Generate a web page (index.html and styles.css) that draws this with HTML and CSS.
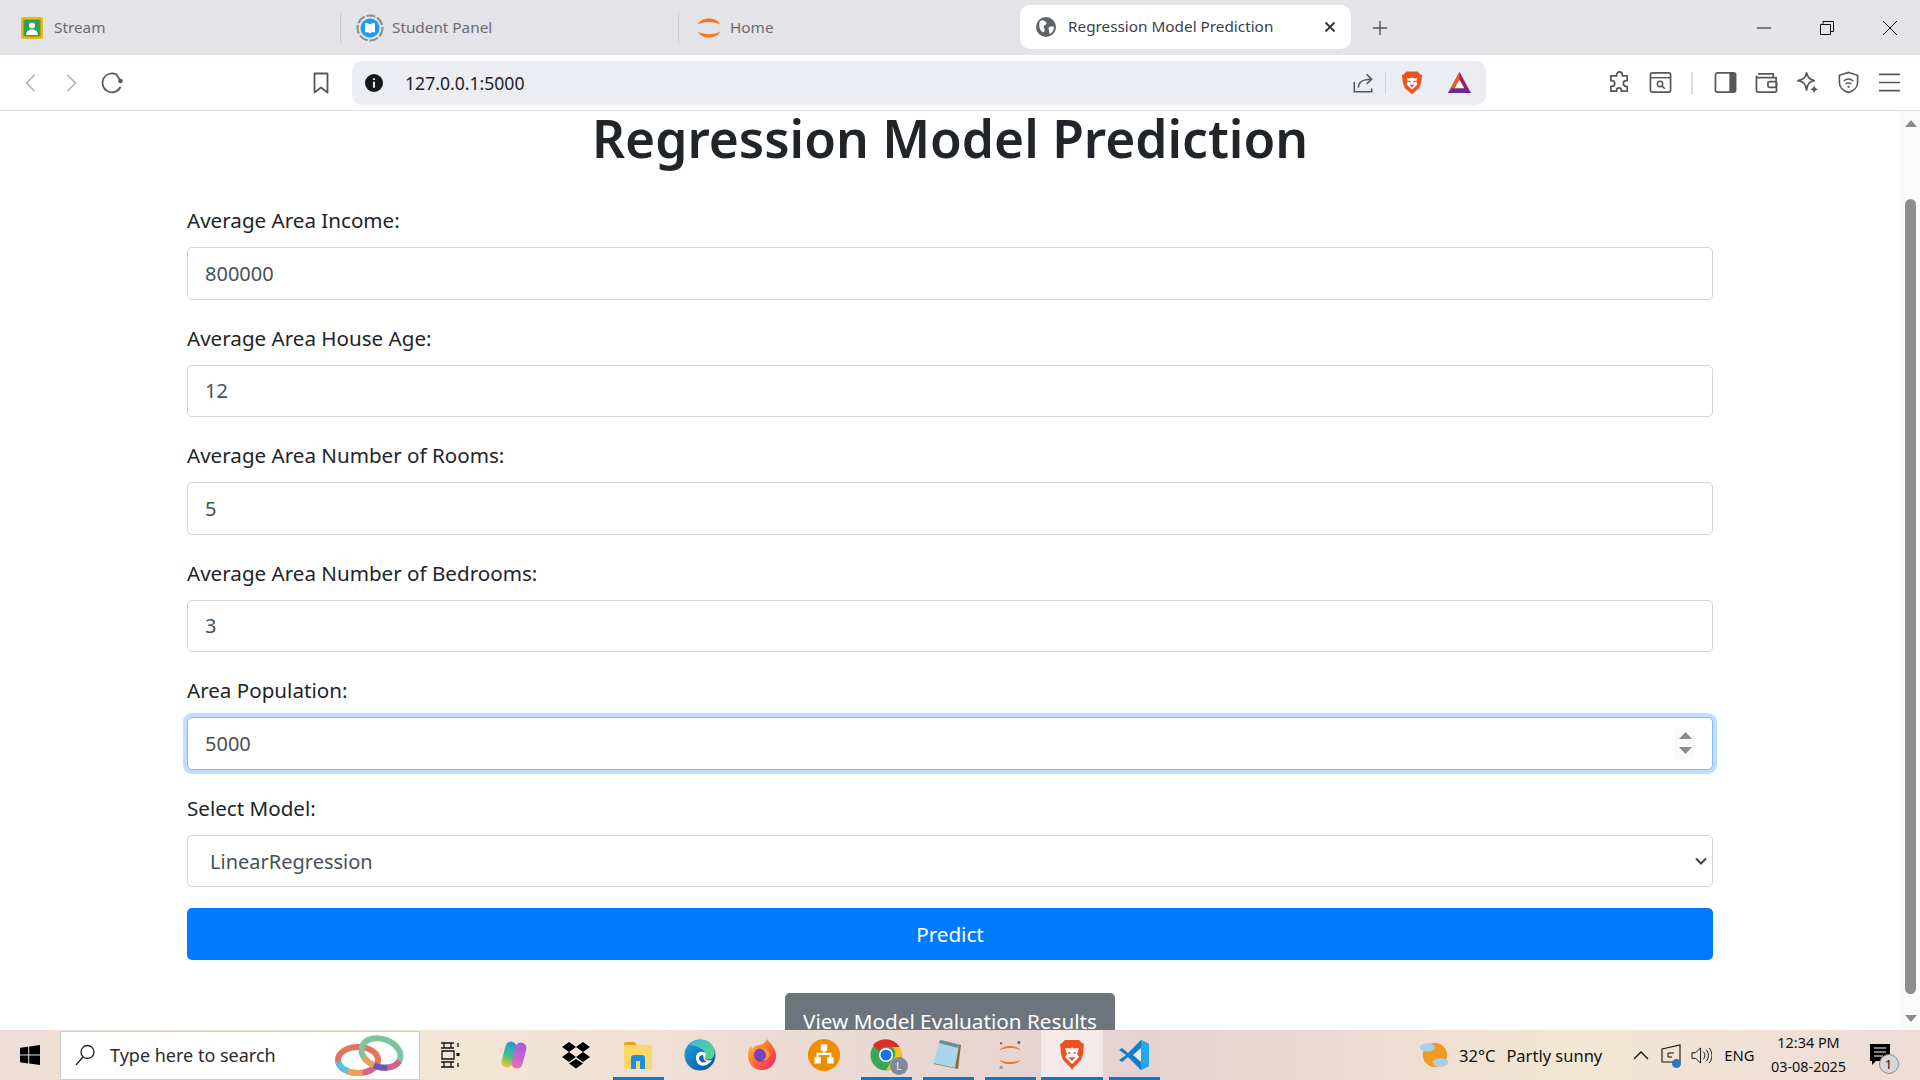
FILE: index.html
```html
<!DOCTYPE html>
<html lang="en">
  <head>
    <meta charset="UTF-8" />
    <title>Regression Model Prediction</title>
    <link rel="stylesheet" href="styles.css">
  </head>
  <body>
    <div class="tabbar">
      <div class="tab tab-stream">
        <svg class="fav" viewBox="0 0 22 22"><rect width="22" height="22" rx="2" fill="#f5b800"/><rect x="2.500" y="2.500" width="17" height="17" fill="#2f9e5b"/><circle cx="11" cy="8.500" r="3" fill="#fff"/><path d="M5 18c0-4 3-5.500 6-5.500s6 1.500 6 5.500z" fill="#fff"/></svg>
        <span>Stream</span>
      </div>
      <div class="tab tab-student">
        <svg class="fav fav-lg" viewBox="0 0 28 28"><circle cx="14" cy="14" r="12.500" fill="none" stroke="#8a8d93" stroke-width="2" stroke-dasharray="9 2"/><circle cx="14" cy="14" r="9.500" fill="#1e9bf0"/><path d="M9 9.500c2-.5 4 0 5 1 1-1 3-1.500 5-1v9c-2-.5-4 0-5 1-1-1-3-1.500-5-1z" fill="#fff"/></svg>
        <span>Student Panel</span>
      </div>
      <div class="tab tab-home">
        <svg class="fav fav-lg" viewBox="0 0 28 28"><path d="M3 10.500c3-8 19-8 22 0-5-3.500-17-3.500-22 0zM3 17.500c3 8 19 8 22 0-5 3.500-17 3.500-22 0z" fill="#f37726"/></svg>
        <span>Home</span>
      </div>
      <div class="tab-active">
        <svg class="fav" viewBox="0 0 20 20"><circle cx="10" cy="10" r="10" fill="#5f6368"/><path d="M4 4c3-1 5 0 6 1s0 3-1 3-2 2-1 3 1 3 0 4-3-1-4-3-1-6 0-8zM13 10c2-1 4-1 5 0 0 3-2 6-4 7-1-1-1-2-1-3s-1-3 0-4z" fill="#fff"/></svg>
        <span class="tab-active-title">Regression Model Prediction</span>
        <svg class="tab-close" viewBox="0 0 12 12"><path d="M1.500 1.500l9 9M10.500 1.500l-9 9" stroke="#333" stroke-width="1.800"/></svg>
      </div>
      <svg class="tab-new" viewBox="0 0 16 16"><path d="M8 1v14M1 8h14" stroke="#555" stroke-width="1.400"/></svg>
      <div class="window-btns">
        <svg viewBox="0 0 16 16"><path d="M1 8h14" stroke="#111" stroke-width="1"/></svg>
        <svg viewBox="0 0 16 16"><path d="M1.500 4.500h10v10h-10zM4 4.500V1.500h10.500v10H11.500" fill="none" stroke="#111" stroke-width="1"/></svg>
        <svg viewBox="0 0 16 16"><path d="M1 1l14 14M15 1L1 15" stroke="#111" stroke-width="1"/></svg>
      </div>
    </div>

    <div class="toolbar">
      <div class="nav-btns">
        <svg viewBox="0 0 20 24"><path d="M14 3L5 12l9 9" fill="none" stroke="#b5b5b8" stroke-width="1.800"/></svg>
        <svg viewBox="0 0 20 24"><path d="M6 3l9 9-9 9" fill="none" stroke="#b5b5b8" stroke-width="1.800"/></svg>
        <svg viewBox="0 0 24 24"><path d="M20.500 16a9.500 9.500 0 1 1-4-12.500" fill="none" stroke="#55585e" stroke-width="1.800"/><path d="M16 3l4 6" stroke="#55585e" stroke-width="1.800"/><circle cx="20.500" cy="10" r="2.300" fill="#55585e"/></svg>
      </div>
      <svg class="bookmark" viewBox="0 0 18 24"><path d="M2.500 2.500h13v19L9 16.500l-6.500 5z" fill="none" stroke="#55585e" stroke-width="1.800" stroke-linejoin="round"/></svg>
      <div class="addressbar">
        <svg class="info" viewBox="0 0 18 18"><circle cx="9" cy="9" r="9" fill="#17181c"/><path d="M9 4.200v1.800M9 7.800v6" stroke="#fff" stroke-width="1.800"/></svg>
        <span class="url">127.0.0.1:5000</span>
        <svg class="share" viewBox="0 0 24 24"><path d="M2.500 11v10.500h19V18M7 17c0-5 4-9 14-9M16 2.500L21.500 8 16 13" fill="none" stroke="#55585e" stroke-width="1.700"/></svg>
        <span class="addr-sep"></span>
        <svg class="brave" viewBox="0 0 24 26"><path d="M6 1h12l3 3 2 1-1 8-2 6-7 6-1 .5-1-.5-7-6-2-6-1-8 2-1z" fill="#f1501f"/><path d="M6 8l4 .5 2-1 2 1 4-.5-1.500 4 1.500 3-3 3-3 3-3-3-3-3 1.500-3z" fill="#fff"/><path d="M8 11.500l2.500.8M16 11.500l-2.500.8M10.500 16h3l-1.500 1.500z" stroke="#f1501f" stroke-width="1.200" fill="#f1501f"/></svg>
        <svg class="bat" viewBox="0 0 26 24"><path d="M13 1l12 22H1z" fill="#9e1f63"/><path d="M13 1L1 23h8l4-14z" fill="#f15a29"/><path d="M1 23h24l-4-5H5z" fill="#662d91"/><path d="M13 9l5 9H8z" fill="#fff"/></svg>
      </div>
      <div class="tool-icons">
        <svg viewBox="0 0 24 24"><path d="M9 4a3 3 0 0 1 6 0v1h5v5h-1a3 3 0 0 0 0 6h1v5h-6v-1a2.500 2.500 0 0 0-5 0v1H3v-5h1a3 3 0 0 0 0-6H3V5h6z" fill="none" stroke="#55585e" stroke-width="1.800" stroke-linejoin="round"/></svg>
        <svg viewBox="0 0 24 24"><rect x="1.500" y="2" width="21" height="20" rx="2" fill="none" stroke="#55585e" stroke-width="1.800"/><path d="M2 7h20" stroke="#55585e" stroke-width="1.500"/><circle cx="11.500" cy="13.500" r="2.800" fill="none" stroke="#55585e" stroke-width="1.600"/><path d="M13.500 15.500l3 3" stroke="#55585e" stroke-width="1.600"/></svg>
        <span class="tool-sep"></span>
        <svg viewBox="0 0 24 24"><rect x="1.500" y="2" width="21" height="20" rx="2" fill="none" stroke="#55585e" stroke-width="1.800"/><path d="M16 2h5a2 2 0 0 1 2 2v16a2 2 0 0 1-2 2h-5z" fill="#55585e"/></svg>
        <svg viewBox="0 0 24 24"><path d="M22 7H3.500a2 2 0 0 1-2-2v15a2 2 0 0 0 2 2h17a2 2 0 0 0 2-2zM3 3h16v4" fill="none" stroke="#55585e" stroke-width="1.800"/><rect x="13.500" y="11" width="9" height="6" rx="1.500" fill="none" stroke="#55585e" stroke-width="1.800"/></svg>
        <svg viewBox="0 0 24 24"><path d="M11 2c1 5 3 7 8 8-5 1-7 3-8 10-1-7-3-9-9-10 6-1 8-3 9-8z" fill="none" stroke="#55585e" stroke-width="1.800" stroke-linejoin="round"/><path d="M19 15l1.300 2.700L23 19l-2.700 1.300L19 23l-1.300-2.700L15 19l2.700-1.300z" fill="#55585e"/></svg>
        <svg viewBox="0 0 24 24"><path d="M12 1.500l9.500 3V12c0 5-4 9-9.500 10.500C6.500 21 2.500 17 2.500 12V4.500z" fill="none" stroke="#55585e" stroke-width="1.700"/><path d="M7 10.500c3-2.500 7-2.500 10 0M9 13.500c2-1.300 4-1.300 6 0" fill="none" stroke="#55585e" stroke-width="1.500"/><circle cx="12" cy="16.500" r="1.200" fill="#55585e"/></svg>
        <svg viewBox="0 0 24 24"><path d="M1 3.500h22M1 12h22M1 20.500h22" stroke="#55585e" stroke-width="1.800"/></svg>
      </div>
    </div>

    <div class="viewport">
      <main class="page">
        <h1>Regression Model Prediction</h1>
        <form class="predict-form">
          <div class="form-group">
            <label>Average Area Income:</label>
            <div class="form-control">800000</div>
          </div>
          <div class="form-group">
            <label>Average Area House Age:</label>
            <div class="form-control">12</div>
          </div>
          <div class="form-group">
            <label>Average Area Number of Rooms:</label>
            <div class="form-control">5</div>
          </div>
          <div class="form-group">
            <label>Average Area Number of Bedrooms:</label>
            <div class="form-control">3</div>
          </div>
          <div class="form-group">
            <label>Area Population:</label>
            <div class="form-control is-focus">
              <span>5000</span>
              <span class="spinner">
                <svg viewBox="0 0 13 22"><path d="M6.500 0L13 7H0zM0 15h13l-6.500 7z" fill="#8a8a8a"/></svg>
              </span>
            </div>
          </div>
          <div class="form-group form-group-select">
            <label>Select Model:</label>
            <div class="form-control form-select">
              <span>LinearRegression</span>
              <svg viewBox="0 0 12 8"><path d="M1 1.500l5 5 5-5" fill="none" stroke="#3d4450" stroke-width="2"/></svg>
            </div>
          </div>
          <div class="btn-predict">Predict</div>
        </form>
        <div class="results-row">
          <div class="btn-results">View Model Evaluation Results</div>
        </div>
      </main>
      <div class="scrollbar">
        <span class="arrow-up"></span>
        <div class="scroll-track"><div class="scroll-thumb"></div></div>
        <span class="arrow-down"></span>
      </div>
    </div>

    <div class="taskbar">
      <div class="start">
        <svg viewBox="0 0 20 20"><path d="M0 2.800l8.200-1.100v7.900H0zM9.200 1.500L20 0v9.600H9.200zM0 10.500h8.200v7.900L0 17.200zM9.200 10.500H20V20L9.200 18.500z" fill="#000"/></svg>
      </div>
      <div class="search">
        <svg class="search-icon" viewBox="0 0 20 22"><circle cx="12.500" cy="8" r="6.500" fill="none" stroke="#222" stroke-width="1.300"/><path d="M8 13L1 21" stroke="#222" stroke-width="1.300"/></svg>
        <span class="search-text">Type here to search</span>
        <svg class="rings" viewBox="0 0 72 44">
          <g fill="none" stroke-width="6">
            <ellipse cx="24" cy="27" rx="20" ry="13" stroke="#e2735e"/>
            <ellipse cx="24" cy="27" rx="20" ry="13" stroke="#58c4dc" stroke-dasharray="14 91" stroke-dashoffset="-36"/>
            <ellipse cx="24" cy="27" rx="20" ry="13" stroke="#f0a050" stroke-dasharray="14 91" stroke-dashoffset="-22"/>
            <ellipse cx="24" cy="27" rx="20" ry="13" stroke="#d9608c" stroke-dasharray="12 93" stroke-dashoffset="-8"/>
            <ellipse cx="47" cy="20" rx="20" ry="14" stroke="#7cc5a0" transform="rotate(18 47 20)"/>
            <ellipse cx="47" cy="20" rx="20" ry="14" stroke="#d9608c" stroke-dasharray="14 94" stroke-dashoffset="-2" transform="rotate(18 47 20)"/>
            <ellipse cx="47" cy="20" rx="20" ry="14" stroke="#6a55c0" stroke-dasharray="14 94" stroke-dashoffset="-16" transform="rotate(18 47 20)"/>
            <ellipse cx="47" cy="20" rx="20" ry="14" stroke="#f0a050" stroke-dasharray="12 96" stroke-dashoffset="-30" transform="rotate(18 47 20)"/>
          </g>
        </svg>
      </div>
      <div class="taskview">
        <svg viewBox="0 0 20 26"><path d="M1 1h13M1 6h13M2 9h12v8H2zM1 20h13M1 25h13M4 1v5M11 1v5M4 20v5M11 20v5M18 1v4M18 21v4" fill="none" stroke="#111" stroke-width="1.300"/><rect x="16.500" y="11" width="3" height="3" fill="#111"/></svg>
      </div>
      <div class="task-slot">
        <svg viewBox="0 0 30 30"><defs><linearGradient id="cp1" gradientUnits="userSpaceOnUse" x1="4" y1="26" x2="14" y2="2"><stop offset="0" stop-color="#f2c53d"/><stop offset=".45" stop-color="#3fc47a"/><stop offset="1" stop-color="#2a8ff0"/></linearGradient><linearGradient id="cp2" gradientUnits="userSpaceOnUse" x1="26" y1="4" x2="14" y2="28"><stop offset="0" stop-color="#a65be0"/><stop offset=".6" stop-color="#c864d0"/><stop offset="1" stop-color="#ef6fa6"/></linearGradient></defs><path d="M12 7L8 22" stroke="url(#cp1)" stroke-width="11" stroke-linecap="round" fill="none"/><path d="M22 8l-4 15" stroke="url(#cp2)" stroke-width="11" stroke-linecap="round" fill="none"/></svg>
      </div>
      <div class="task-slot">
        <svg viewBox="0 0 30 28"><path d="M8 1l7 5-7 5-7-5zM22 1l7 5-7 5-7-5zM8 11l7 5-7 5-7-5zM22 11l7 5-7 5-7-5zM15 18l7 4.500-7 5-7-5z" fill="#000"/></svg>
      </div>
      <div class="task-slot is-open">
        <svg viewBox="0 0 30 28"><path d="M1 3a2 2 0 0 1 2-2h8l3 3H1z" fill="#e3a21a"/><path d="M1 4h28v22a2 2 0 0 1-2 2H3a2 2 0 0 1-2-2z" fill="#fbd668"/><path d="M8 28V17a3 3 0 0 1 3-3h8a3 3 0 0 1 3 3v11h-5v-8h-4v8z" fill="#1d8fe0"/></svg>
      </div>
      <div class="task-slot">
        <svg class="icon-lg" viewBox="0 0 32 32"><defs><linearGradient id="edge1" x1="0" y1="0" x2="1" y2="1"><stop offset="0" stop-color="#1fa3e0"/><stop offset="1" stop-color="#0b4f9e"/></linearGradient><linearGradient id="edge2" x1="0" y1="0" x2="1" y2="1"><stop offset="0" stop-color="#35b8e0"/><stop offset="1" stop-color="#62dc7c"/></linearGradient></defs><circle cx="16" cy="16" r="15.500" fill="url(#edge1)"/><path d="M5 6c6-7 18-7 23 0 4 5 3 12-1 14-4 1-7 0-8-2 2-1 3-4 1-6-4-4-11-6-15-6z" fill="url(#edge2)"/><path d="M12 18c0-4 4-6 8-5 2 1 2 4 1 5-1 3 3 4 7 3-3 5-9 7-12 5-3-1-4-5-4-8z" fill="#fff"/><path d="M15 19c0-2 2-3 4-3 1 3 0 5 3 6 2 1-6 4-7-3z" fill="#1265b4"/></svg>
      </div>
      <div class="task-slot">
        <svg class="icon-lg" viewBox="0 0 32 32"><defs><linearGradient id="ff1" x1="0" y1="0" x2="1" y2="1"><stop offset="0" stop-color="#ffcb2e"/><stop offset=".5" stop-color="#ff6b2e"/><stop offset="1" stop-color="#e6207c"/></linearGradient></defs><path d="M21 0c2 3 8 8 9 15 1 9-6 16-14 16S2 25 2 16c0-4 1-7 3-9l1 3c2-3 5-4 8-4 3-1 6-3 7-6z" fill="url(#ff1)"/><circle cx="15" cy="16" r="7" fill="#7b3fc4"/><path d="M10 11c5-3 10 0 10 6 0 2-2 4-4 5 5 0 8-4 8-8-2-4-8-7-14-3z" fill="#ff9a2e"/></svg>
      </div>
      <div class="task-slot">
        <svg class="icon-lg" viewBox="0 0 30 30"><circle cx="15" cy="15" r="15" fill="#f08c00"/><path d="M12 5h6v6h-2v2h6v4h2v6h-6v-6h2v-2H10v2h2v6H6v-6h2v-4h6v-2h-2z" fill="#fff"/></svg>
      </div>
      <div class="task-slot is-open">
        <span class="chrome-wrap">
          <svg class="icon-lg" viewBox="0 0 32 32"><circle cx="16" cy="16" r="15.500" fill="#3aa757"/><path d="M16 .5A15.500 15.500 0 0 1 29.500 8H16a8 8 0 0 0-7 4L3 6A15.500 15.500 0 0 1 16 .5z" fill="#d93025"/><path d="M29.500 8A15.500 15.500 0 0 1 16 31.500L22 21a8 8 0 0 0 0-13z" fill="#f9c31e"/><circle cx="16" cy="16" r="7" fill="#fff"/><circle cx="16" cy="16" r="5.500" fill="#1a73e8"/></svg>
          <span class="chrome-badge">L</span>
        </span>
      </div>
      <div class="task-slot is-open">
        <svg class="icon-lg" viewBox="0 0 30 32"><path d="M8 1l20 5-3 24L1 25z" fill="#8a6b3a"/><path d="M7 1l19 5-4 23L0 24z" fill="#a8d6ea"/><path d="M7 1l19 5-1 3L6 4z" fill="#6b8a9a"/></svg>
      </div>
      <div class="task-slot is-open">
        <svg class="icon-lg" viewBox="0 0 30 36"><path d="M3 13c3-7 21-7 24 0-5-4-19-4-24 0zM3 23c3 7 21 7 24 0-5 4-19 4-24 0z" fill="#f37726"/><circle cx="25" cy="4" r="1.700" fill="#616262"/><circle cx="5" cy="5" r="1.300" fill="#616262"/><circle cx="5" cy="32" r="2" fill="#9e9e9e"/></svg>
      </div>
      <div class="task-slot is-active">
        <svg class="icon-lg" viewBox="0 0 26 32"><path d="M6 1h14l3 3 2 1-1 10-2 6-8 8-1 2-1-2-8-8-2-6L1 5l2-1z" fill="#f1501f"/><path d="M6 9l5 .5 2-1 2 1 5-.5-2 6 2 3-4 4-3 3-3-3-4-4 2-3z" fill="#fff"/><path d="M9 13.500l2.500.8M17 13.500l-2.500.8M11 19h4l-2 2z" stroke="#f1501f" stroke-width="1.300" fill="#f1501f"/></svg>
      </div>
      <div class="task-slot is-open">
        <svg class="icon-lg" viewBox="0 0 32 32"><path d="M23 1l8 4v22l-8 4-13-13-6 5-3-2 7-5-7-5 3-2 6 5z" fill="#0e7fc8"/><path d="M23 1l8 4v22l-8 4V1z" fill="#25a7ef"/><path d="M23 9l-8 7 8 7z" fill="#f5e9e4"/></svg>
      </div>
      <div class="tray">
        <svg class="weather" viewBox="0 0 32 32"><circle cx="17" cy="16" r="13" fill="#f29a1f"/><ellipse cx="9" cy="8" rx="8" ry="4.500" fill="#a9cdec"/><ellipse cx="23" cy="24" rx="8.500" ry="4.500" fill="#a9cdec"/></svg>
        <span class="tray-temp">32°C</span>
        <span class="tray-cond">Partly sunny</span>
        <svg class="tray-chev" viewBox="0 0 16 10"><path d="M1 9l7-7 7 7" fill="none" stroke="#111" stroke-width="1.300"/></svg>
        <span class="tray-net">
          <svg viewBox="0 0 20 22"><path d="M1 5l18-4v17H1z" fill="none" stroke="#111" stroke-width="1.100"/><path d="M7 9h6M7 13h4M7 9v4" fill="none" stroke="#111" stroke-width="1"/></svg>
          <span class="net-dot"></span>
        </span>
        <svg class="tray-sound" viewBox="0 0 22 20"><path d="M1 7h4l5-5v16l-5-5H1zM13 6c2 2 2 6 0 8M16 4c3 3 3 9 0 12M19 2c4 4 4 12 0 16" fill="none" stroke="#111" stroke-width="1"/></svg>
        <span class="tray-lang">ENG</span>
        <span class="tray-clock"><span>12:34 PM</span><span>03-08-2025</span></span>
        <span class="tray-notif">
          <svg viewBox="0 0 20 22"><path d="M0 0h20v17H6l-4 4v-4H0z" fill="#000"/><path d="M4 4h12M4 8h12M4 12h9" stroke="#fff" stroke-width="1.200"/></svg>
          <span class="notif-count">1</span>
        </span>
      </div>
    </div>
  </body>
</html>
```

FILE: styles.css
```css
* {
  box-sizing: border-box;
}
body {
  font-family: "Noto Sans", "Open Sans", sans-serif;
  margin: 0;
  height: 100vh;
  display: flex;
  flex-direction: column;
  overflow: hidden;
  color: #212529;
  background-color: #fff;
}
svg {
  display: block;
  flex: none;
}

/* tab strip */
.tabbar {
  height: 55px;
  display: flex;
  align-items: center;
  background-color: #e3e3e8;
  font-size: 15.3px;
  color: #6a6c72;
  flex: none;
}
.tab {
  height: 30px;
  display: flex;
  align-items: center;
  gap: 11px;
  border-right: 1px solid #c9c9cd;
}
.tab span,
.tab-active-title {
  padding-bottom: 2px;
}
.tab-stream {
  width: 341px;
  padding-left: 21px;
}
.tab-student {
  width: 338px;
  padding-left: 15px;
  gap: 8px;
}
.tab-home {
  width: 341px;
  padding-left: 16px;
  border-right: none;
  gap: 7px;
}
.fav {
  width: 22px;
  height: 22px;
}
.fav-lg {
  width: 28px;
  height: 28px;
}
.tab-active {
  width: 331px;
  height: 44px;
  display: flex;
  align-items: center;
  padding: 0 15px 0 16px;
  background-color: #fff;
  border-radius: 10px;
  color: #3c3f45;
  margin-top: -1px;
}
.tab-active .fav {
  width: 20px;
  height: 20px;
}
.tab-active-title {
  margin-left: 12px;
  flex: 1;
}
.tab-close {
  width: 12px;
  height: 12px;
}
.tab-new {
  width: 16px;
  height: 16px;
  margin-left: 21px;
}
.window-btns {
  margin-left: auto;
  display: flex;
  gap: 47px;
  padding-right: 22px;
}
.window-btns svg {
  width: 16px;
  height: 16px;
}

/* address row */
.toolbar {
  height: 56px;
  display: flex;
  align-items: center;
  border-bottom: 1px solid #dedee2;
  background-color: #fff;
  flex: none;
}
.nav-btns {
  display: flex;
  align-items: center;
  margin-left: 22px;
  gap: 22px;
}
.nav-btns svg {
  width: 18px;
  height: 24px;
}
.nav-btns svg:last-child {
  width: 24px;
  margin-left: -2px;
}
.bookmark {
  width: 18px;
  height: 24px;
  margin-left: 188px;
}
.addressbar {
  width: 1134px;
  height: 44px;
  margin-left: 22px;
  display: flex;
  align-items: center;
  background-color: #ecedf2;
  border-radius: 10px;
  padding: 0 14px 0 13px;
}
.info {
  width: 18px;
  height: 18px;
}
.url {
  margin-left: 22px;
  font-size: 17.6px;
  color: #1f2126;
  flex: 1;
}
.share {
  width: 22px;
  height: 22px;
}
.addr-sep {
  width: 1px;
  height: 22px;
  margin-left: 11px;
  background-color: #d3d3d8;
}
.brave {
  width: 22px;
  height: 25px;
  margin-left: 15px;
}
.bat {
  width: 25px;
  height: 23px;
  margin-left: 24px;
}
.tool-icons {
  display: flex;
  align-items: center;
  margin-left: 122px;
  gap: 18px;
}
.tool-icons svg {
  width: 23px;
  height: 23px;
}
.tool-sep {
  width: 2px;
  height: 22px;
  background-color: #dcdce0;
  margin: 0 3px 0 1px;
}

/* page */
.viewport {
  flex: 1;
  min-height: 0;
  display: flex;
  overflow: hidden;
}
.page {
  flex: 1;
  min-width: 0;
  padding: 0 187px;
}
h1 {
  margin: 0 0 40px;
  font-size: 51.5px;
  font-weight: 600;
  line-height: 54px;
  padding-bottom: 2px;
  text-align: center;
}
.form-group {
  margin-bottom: 25px;
}
.form-group-select {
  margin-bottom: 21px;
}
label {
  display: block;
  font-size: 20.6px;
  line-height: 26px;
  margin-bottom: 14px;
}
.form-control {
  height: 52.500px;
  display: flex;
  align-items: center;
  justify-content: space-between;
  padding: 0 17px;
  border: 1px solid #ced4da;
  border-radius: 5px;
  font-size: 20px;
  color: #495057;
  background-color: #fff;
}
.is-focus {
  border-color: #80bdff;
  box-shadow: 0 0 0 4px rgba(0, 123, 255, 0.25);
  padding-right: 17px;
}
.spinner {
  width: 20px;
  height: 31px;
  display: flex;
  align-items: center;
  justify-content: center;
  background-color: #fafafa;
}
.spinner svg {
  width: 13px;
  height: 22px;
}
.form-select {
  padding: 0 5px 0 22px;
}
.form-select span {
  padding-top: 2px;
}
.form-select svg {
  width: 12px;
  height: 8px;
}
.btn-predict {
  height: 52px;
  display: flex;
  align-items: center;
  justify-content: center;
  background-color: #007bff;
  border-radius: 5px;
  color: #fff;
  font-size: 20.6px;
}
.results-row {
  display: flex;
  justify-content: center;
  margin-top: 33px;
}
.btn-results {
  width: 330px;
  height: 56px;
  display: flex;
  align-items: center;
  justify-content: center;
  background-color: #6c757d;
  border-radius: 5px;
  color: #fff;
  font-size: 20.7px;
}
.scrollbar {
  width: 20px;
  display: flex;
  flex-direction: column;
  align-items: center;
  padding: 9px 0 8px 1px;
  background-color: #fafafa;
  flex: none;
}
.arrow-up,
.arrow-down {
  width: 0;
  height: 0;
  border-left: 6.500px solid transparent;
  border-right: 6.500px solid transparent;
}
.arrow-up {
  border-bottom: 7px solid #8a8a8a;
}
.arrow-down {
  border-top: 7px solid #8a8a8a;
}
.scroll-track {
  flex: 1;
  width: 100%;
  padding-top: 72px;
  padding-bottom: 21px;
}
.scroll-thumb {
  width: 11px;
  height: 100%;
  background-color: #8d8d8d;
  border-radius: 6px;
  margin: 0 auto;
}

/* taskbar */
.taskbar {
  height: 50px;
  display: flex;
  align-items: center;
  background: linear-gradient(90deg, #eeddd6 0%, #f3e6d5 25%, #e9d6d3 48%, #e6d2d2 60%, #f3e6d3 82%, #eedcd8 100%);
  color: #111;
  flex: none;
}
.start {
  width: 60px;
  display: flex;
  justify-content: center;
}
.start svg {
  width: 20px;
  height: 20px;
}
.search {
  width: 360px;
  height: 49px;
  margin-top: 1px;
  display: flex;
  align-items: center;
  border: 1px solid #cfcfcf;
  background-color: #fff;
  padding: 0 0 2px 14px;
  font-size: 18px;
  color: #2b2b2b;
}
.search-icon {
  width: 20px;
  height: 22px;
}
.search-text {
  margin-left: 15px;
}
.rings {
  width: 72px;
  height: 44px;
  margin-left: auto;
  margin-right: 13px;
}
.taskview {
  width: 63px;
  padding-left: 20px;
}
.taskview svg {
  width: 20px;
  height: 26px;
}
.task-slot {
  width: 62px;
  height: 50px;
  display: flex;
  align-items: center;
  justify-content: center;
  position: relative;
  flex: none;
}
.task-slot svg {
  width: 30px;
  height: 30px;
}
.task-slot svg.icon-lg {
  width: 32px;
  height: 32px;
}
.is-open::after,
.is-active::after {
  content: "";
  position: absolute;
  left: 6px;
  right: 5px;
  bottom: 0;
  height: 3px;
  background-color: #0a78d0;
}
.is-active {
  background-color: rgba(255, 255, 255, 0.5);
}
.is-active::after {
  left: 0;
  right: 0;
}
.chrome-wrap {
  position: relative;
}
.chrome-badge {
  position: absolute;
  right: -6px;
  bottom: -4px;
  width: 18px;
  height: 18px;
  border-radius: 50%;
  background-color: #7d8b99;
  color: #e8e8e8;
  font-size: 11px;
  line-height: 18px;
  text-align: center;
}
.tray {
  flex: 1;
  display: flex;
  align-items: center;
  font-size: 16.5px;
  padding-left: 254px;
  height: 50px;
}
.weather {
  width: 30px;
  height: 32px;
}
.tray-temp {
  margin-left: 10px;
}
.tray-cond {
  margin-left: 11px;
}
.tray-chev {
  width: 16px;
  height: 10px;
  margin-left: 31px;
}
.tray-net {
  position: relative;
  margin-left: 12px;
}
.tray-net svg {
  width: 20px;
  height: 22px;
}
.net-dot {
  position: absolute;
  right: 0;
  bottom: -2px;
  width: 9px;
  height: 9px;
  border-radius: 50%;
  background-color: #2b74c4;
}
.tray-sound {
  width: 21px;
  height: 19px;
  margin-left: 10px;
}
.tray-lang {
  margin-left: 12px;
  font-size: 14.8px;
}
.tray-clock {
  display: flex;
  flex-direction: column;
  align-items: center;
  margin-left: 14px;
  width: 80px;
  font-size: 14.4px;
  line-height: 24px;
}
.tray-notif {
  position: relative;
  margin-left: 21px;
}
.tray-notif svg {
  width: 20px;
  height: 22px;
}
.notif-count {
  position: absolute;
  left: 9px;
  top: 10px;
  width: 20px;
  height: 20px;
  border-radius: 50%;
  background-color: #d8d8d8;
  border: 1px solid #888;
  font-size: 13px;
  line-height: 18px;
  text-align: center;
}
```
